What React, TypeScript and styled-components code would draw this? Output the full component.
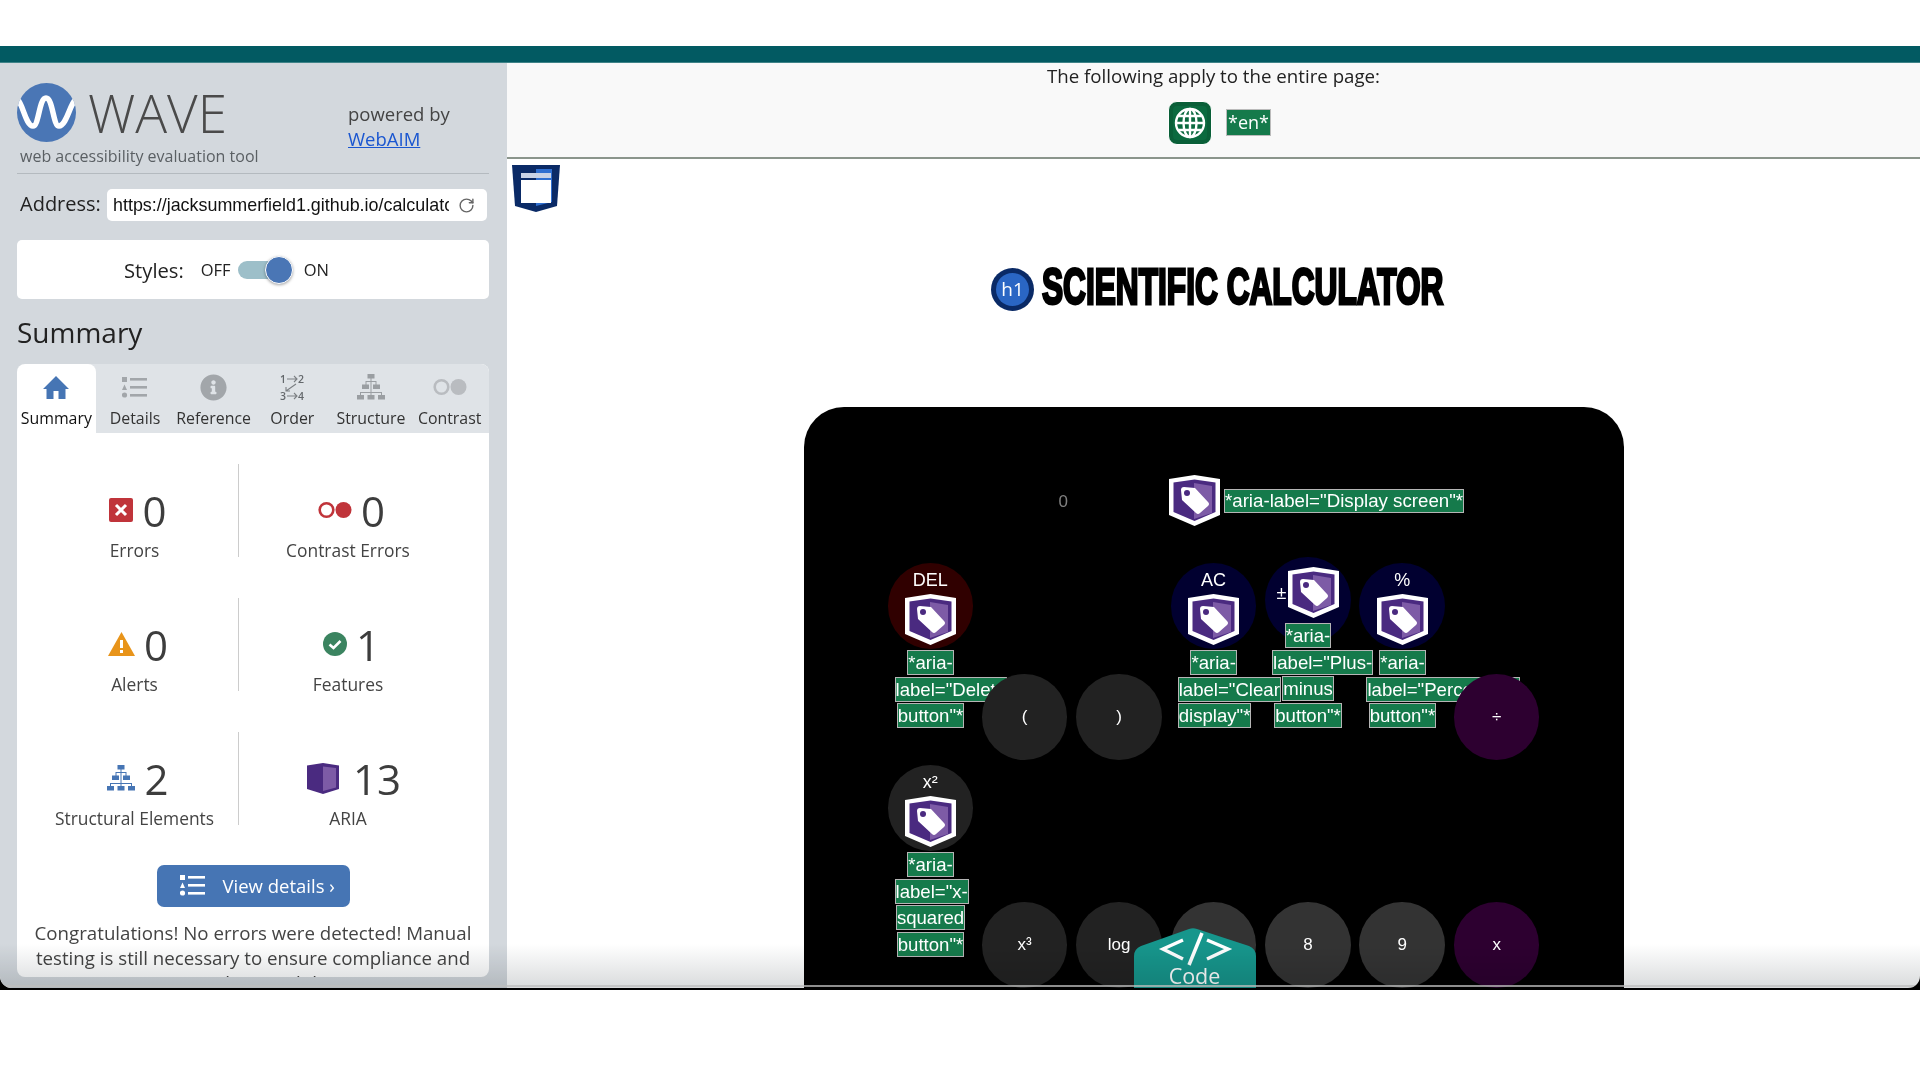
import styled, { createGlobalStyle } from 'styled-components';
import { FaInfoCircle } from 'react-icons/fa';
import { RotateCw } from 'lucide-react';

const GlobalStyle = createGlobalStyle`
  html, body {
    margin: 0;
    background: #fff;
  }
  * {
    box-sizing: border-box;
  }
`;

const Page = styled.div`
  width: 1920px;
  height: 1080px;
  padding-top: 46px;
  overflow: hidden;
  font-family: 'Open Sans', sans-serif;
`;

const TopBar = styled.div`
  height: 17px;
  background: #025a62;
  border-bottom: 1px solid #3f8388;
`;

const WindowFrame = styled.div`
  background: #000;
  padding-bottom: 2px;
`;

const Window = styled.div`
  position: relative;
  display: flex;
  height: 925px;
  overflow: hidden;
  background: #fff;
  border-radius: 0 0 12px 12px;
`;

const Vignette = styled.div`
  position: absolute;
  left: 0;
  right: 0;
  bottom: 0;
  height: 44px;
  background: linear-gradient(to bottom, #fff, #d9dbdc);
  mix-blend-mode: multiply;
  pointer-events: none;
  z-index: 5;
`;

const EdgeLine = styled.div`
  position: absolute;
  left: 0;
  right: 0;
  bottom: 1px;
  height: 2px;
  background: rgba(190, 190, 190, 0.75);
  pointer-events: none;
  z-index: 6;
`;

const Sidebar = styled.aside`
  width: 507px;
  flex: none;
  background: #d3d8dd;
  padding: 0 18px 0 17px;
  display: flex;
  flex-direction: column;
`;

const Brand = styled.div`
  display: flex;
  height: 111px;
  border-bottom: 1px solid #b4babf;
`;

const BrandLeft = styled.div`
  width: 331px;
  flex: none;
  padding-top: 20px;
`;

const BrandTop = styled.div`
  display: flex;
  align-items: center;
  gap: 12px;
  height: 59px;
`;

const WaveTitle = styled.div`
  font-size: 53px;
  font-weight: 300;
  line-height: 59px;
  color: #4a4a4a;
`;

const Tagline = styled.div`
  font-size: 16px;
  line-height: 20px;
  color: #5a5f63;
  margin: 4px 0 0 3px;
`;

const Powered = styled.div`
  padding-top: 38px;
  font-size: 18.5px;
  line-height: 25px;
  color: #444;
`;

const PoweredLink = styled.a`
  display: block;
  color: #1a56d0;
  text-decoration: underline;
`;

const AddressRow = styled.div`
  display: flex;
  align-items: center;
  height: 32px;
  margin-top: 15px;
  padding-left: 3px;
`;

const AddressLabel = styled.div`
  width: 87px;
  flex: none;
  font-size: 20px;
  margin-top: -3px;
  color: #222;
`;

const AddressBox = styled.div`
  width: 380px;
  height: 32px;
  padding: 0 12px 0 6px;
  background: #fff;
  border-radius: 5px;
  display: flex;
  align-items: center;
  gap: 9px;
  color: #666;
`;

const AddressText = styled.div`
  flex: 1;
  overflow: hidden;
  white-space: nowrap;
  font-family: 'Liberation Sans', Arial, sans-serif;
  font-size: 17.9px;
  color: #111;
`;

const StylesCard = styled.div`
  height: 59px;
  margin-top: 19px;
  background: #fff;
  border-radius: 5px;
  display: flex;
  align-items: center;
  padding-left: 107px;
  color: #222;
`;

const StylesLabel = styled.div`
  font-size: 20.2px;
  margin-right: 17px;
`;

const SwitchText = styled.div`
  font-size: 16.5px;
`;

const Switch = styled.div`
  position: relative;
  width: 52px;
  height: 18px;
  margin: 0 14px 0 7px;
  background: #9dbfc9;
  border-radius: 9px;
`;

const SwitchKnob = styled.div`
  position: absolute;
  right: -3px;
  top: -5px;
  width: 28px;
  height: 28px;
  border-radius: 50%;
  background: #4a76b5;
  box-shadow: 0 1px 3px rgba(0, 0, 0, 0.35);
  border: 1px solid #fff;
`;

const SummaryTitle = styled.h2`
  margin: 15px 0 0;
  font-size: 28px;
  line-height: 36px;
  font-weight: 400;
  color: #222;
`;

const Card = styled.div`
  margin-top: 14px;
  height: 613px;
  overflow: hidden;
  background: #fff;
  border-radius: 8px;
`;

const Tabs = styled.div`
  display: grid;
  grid-template-columns: repeat(6, 1fr);
  height: 69px;
  background: #dfe3e7;
`;

const Tab = styled.div<{ $active?: boolean }>`
  display: flex;
  flex-direction: column;
  align-items: center;
  padding-top: 9px;
  background: ${props => (props.$active ? '#fff' : 'transparent')};
  border-radius: ${props => (props.$active ? '8px 8px 0 0' : '0')};
  color: ${props => (props.$active ? '#111' : '#333')};
`;

const TabIcon = styled.div<{ $active?: boolean }>`
  height: 28px;
  display: flex;
  align-items: center;
  justify-content: center;
  color: ${props => (props.$active ? '#4675b4' : '#a2a6aa')};
`;

const TabLabel = styled.div`
  margin-top: 6px;
  font-size: 15.9px;
  line-height: 22px;
  white-space: nowrap;
`;

const Stats = styled.div`
  display: grid;
  grid-template-columns: 208px 218px;
  row-gap: 41px;
  padding: 31px 0 0 14px;
`;

const Stat = styled.div<{ $divider?: boolean }>`
  height: 93px;
  display: flex;
  flex-direction: column;
  align-items: center;
  padding-top: 21px;
  border-right: ${props => (props.$divider ? '1px solid #ccc' : 'none')};
`;

const StatValue = styled.div`
  display: flex;
  align-items: center;
  gap: 9px;
  height: 50px;
  margin-left: 7px;
  font-size: 42px;
  font-weight: 400;
  color: #3d3d3d;
`;

const StatLabel = styled.div`
  margin-top: 4px;
  font-size: 17.4px;
  line-height: 23px;
  color: #444;
  white-space: nowrap;
`;

const ViewDetails = styled.button`
  display: flex;
  align-items: center;
  gap: 18px;
  width: 193px;
  height: 42px;
  margin: 40px auto 0;
  padding: 0 0 2px 23px;
  background: #4675b4;
  border: none;
  border-radius: 7px;
  color: #fff;
  font-family: inherit;
  font-size: 18.5px;
`;

const Congrats = styled.p`
  margin: 13px 0 0;
  padding: 0 12px;
  text-align: center;
  font-size: 18.7px;
  line-height: 25px;
  color: #444;
`;

const Main = styled.main`
  flex: 1;
  display: flex;
  flex-direction: column;
  min-width: 0;
`;

const PageNotes = styled.div`
  height: 96px;
  flex: none;
  background: #f9f9f9;
  border-bottom: 2px solid #8b958c;
  display: flex;
  flex-direction: column;
  align-items: center;
`;

const NotesTitle = styled.div`
  font-size: 18.7px;
  line-height: 26px;
  color: #222;
`;

const NotesRow = styled.div`
  display: flex;
  align-items: center;
  gap: 14px;
  margin: 12px 0 0 12px;
`;

const GlobeBadge = styled.div`
  width: 44px;
  height: 44px;
  border-radius: 9px;
  background: #0b6a3f;
  border: 1px solid #fff;
  box-shadow: inset 0 0 0 4px #0a5f38;
  display: flex;
  align-items: center;
  justify-content: center;
`;

const LangNote = styled.div`
  height: 27px;
  margin-top: -2px;
  padding: 0 1px;
  background: #157a4b;
  border: 1px solid #bbb;
  font-size: 18px;
  line-height: 25px;
  color: #fff;
`;

const Content = styled.div`
  flex: 1;
  min-height: 0;
  display: flex;
  flex-direction: column;
  padding-top: 5px;
`;

const LandmarkSlot = styled.div`
  height: 48px;
  padding-left: 5px;
`;

const HeadingRow = styled.div`
  display: flex;
  align-items: center;
  justify-content: center;
  gap: 8px;
  height: 44px;
  margin-top: 55px;
  margin-bottom: 1px;
  padding-left: 8px;
`;

const Heading = styled.h1`
  width: 402px;
  margin: 0 0 5px;
  white-space: nowrap;
  font-family: 'Liberation Sans', Arial, sans-serif;
  font-size: 50px;
  line-height: 44px;
  font-weight: 700;
  color: #000;
  -webkit-text-stroke: 3px #000;
  transform: scaleX(0.633);
  transform-origin: left center;
`;

const Calculator = styled.div`
  position: relative;
  width: 820px;
  flex: 1;
  min-height: 0;
  margin: 95px auto 0;
  padding: 68px 84px 0;
  overflow: hidden;
  background: #000;
  border-radius: 40px 40px 0 0;
  font-family: 'Liberation Sans', Arial, sans-serif;
`;

const DisplayRow = styled.div`
  display: flex;
  align-items: center;
  gap: 101px;
  height: 51px;
  padding-left: 171px;
`;

const DisplayValue = styled.div`
  font-size: 17px;
  padding-top: 3px;
  color: #808080;
`;

const DisplayNote = styled.div`
  display: flex;
  align-items: center;
  gap: 4px;
`;

const KeyRow = styled.div<{ $top: number; $height: number }>`
  display: grid;
  grid-template-columns: repeat(7, 85.6px);
  column-gap: 8.8px;
  align-items: start;
  height: ${props => props.$height}px;
  margin-top: ${props => props.$top}px;
`;

const KeyShell = styled.div<{ $drop: number; $bg: string; $plain: boolean }>`
  position: relative;
  width: 85.6px;
  height: 86px;
  margin-top: ${props => props.$drop}px;
  border-radius: 50%;
  background: ${props => props.$bg};
  color: #fff;
  font-size: 17px;
  ${props => (props.$plain ? 'display: flex; align-items: center; justify-content: center;' : '')}
`;

const KeyFace = styled.div<{ $inline?: boolean }>`
  display: flex;
  flex-direction: ${props => (props.$inline ? 'row' : 'column')};
  align-items: center;
  justify-content: center;
  gap: ${props => (props.$inline ? '2px' : '0')};
  padding-top: ${props => (props.$inline ? '10px' : '4px')};
`;

const KeyCap = styled.div<{ $inline?: boolean }>`
  height: ${props => (props.$inline ? '20px' : '27px')};
  line-height: ${props => (props.$inline ? '20px' : '27px')};
  font-size: 18px;
`;

const NoteBlock = styled.div`
  width: 72px;
  margin: 5px 0 0 7px;
  text-align: center;
  font-size: 18.6px;
  line-height: 26.67px;
`;

const NoteText = styled.span`
  padding: 1px 0;
  background: #157a4b;
  border: 1px solid #b5b5b5;
  color: #fff;
  -webkit-box-decoration-break: clone;
  box-decoration-break: clone;
`;

const NoteInline = styled.div`
  height: 24px;
  margin-top: 1px;
  background: #157a4b;
  border: 1px solid #b5b5b5;
  color: #fff;
  font-size: 18.7px;
  line-height: 22px;
  white-space: nowrap;
`;

const CodeTab = styled.div`
  position: absolute;
  left: 330px;
  bottom: 0;
  width: 122px;
  height: 60px;
  z-index: 4;
`;

const CodeLabel = styled.div`
  position: absolute;
  left: 0;
  right: 0;
  bottom: 1px;
  text-align: center;
  font-family: 'Open Sans', sans-serif;
  font-size: 21.5px;
  line-height: 22px;
  color: #fff;
`;

const IconSvg = styled.svg`
  flex: none;
`;

const AriaBoxSvg = styled.svg`
  flex: none;
  margin: 0 5px;
`;

const WaveLogo = () => (
  <IconSvg width="59" height="59" viewBox="0 0 59 59">
    <clipPath id="wave-clip">
      <circle cx="29.5" cy="29.5" r="29.5" />
    </clipPath>
    <circle cx="29.5" cy="29.5" r="29.5" fill="#4a76b5" />
    <path
      clipPath="url(#wave-clip)"
      d="M1 17 C6 22 9 43 16 43 C22 43 22 15 29 15 C36 15 36 43 42 43 C49 43 53 22 58 17"
      fill="none"
      stroke="#fff"
      strokeWidth="5.5"
    />
  </IconSvg>
);

const HomeIcon = () => (
  <IconSvg width="26" height="23" viewBox="0 0 26 23" fill="currentColor">
    <path d="M13 0 L26 13 H22.5 V23 H15.5 V15 H10.5 V23 H3.5 V13 H0 Z" />
  </IconSvg>
);

const ListIcon = () => (
  <IconSvg width="25" height="21" viewBox="0 0 25 21" fill="currentColor">
    <rect x="0" y="0" width="5" height="5" />
    <path d="M2.5 7.5 L5 13 H0 Z" />
    <circle cx="2.5" cy="18" r="2.6" />
    <rect x="8" y="1" width="17" height="2.6" />
    <rect x="8" y="9" width="17" height="2.6" />
    <rect x="8" y="17" width="17" height="2.6" />
  </IconSvg>
);

const GlobeIcon = () => (
  <IconSvg width="32" height="32" viewBox="0 0 32 32" fill="none" stroke="#fff" strokeWidth="2.4">
    <circle cx="16" cy="16" r="14" />
    <ellipse cx="16" cy="16" rx="6.5" ry="14" />
    <path d="M16 2 V30 M2.5 16 H29.5 M4.5 9 H27.5 M4.5 23 H27.5" />
  </IconSvg>
);

const OrderIcon = () => (
  <IconSvg width="26" height="28" viewBox="0 0 26 28" fill="none" stroke="#7c8084" strokeWidth="1.1">
    <text x="1" y="10" fontSize="10.5" fontWeight="600" fill="#63676b" stroke="none" fontFamily="Open Sans">1</text>
    <text x="19" y="10" fontSize="10.5" fontWeight="600" fill="#63676b" stroke="none" fontFamily="Open Sans">2</text>
    <text x="1" y="27" fontSize="10.5" fontWeight="600" fill="#63676b" stroke="none" fontFamily="Open Sans">3</text>
    <text x="19" y="27" fontSize="10.5" fontWeight="600" fill="#63676b" stroke="none" fontFamily="Open Sans">4</text>
    <path d="M8 6 H18 M15 3 L18 6 L15 9" />
    <path d="M8 23 H18 M15 20 L18 23 L15 26" />
    <path d="M17 11 L7 18 M7 14 V18 H11" />
  </IconSvg>
);

const TreeIcon = ({ color }: { color: string }) => (
  <IconSvg width="28" height="28" viewBox="0 0 28 28" fill={color}>
    <rect x="10.5" y="1" width="7" height="4.5" />
    <rect x="5" y="11.5" width="7" height="4.5" />
    <rect x="16" y="11.5" width="7" height="4.5" />
    <rect x="0" y="22" width="7" height="4.5" />
    <rect x="10.5" y="22" width="7" height="4.5" />
    <rect x="21" y="22" width="7" height="4.5" />
    <path d="M13.5 5 h1 v3 h5 v4 h-1 v-3 h-9 v3 h-1 v-4 h5 Z" />
    <path d="M13.5 9 h1 v14 h-1 Z M3 19 h22 v3.5 h-1 v-2.5 h-20 v2.5 h-1 Z" />
  </IconSvg>
);

const ContrastIcon = ({ color }: { color: string }) => (
  <IconSvg width="34" height="18" viewBox="0 0 34 18">
    <circle cx="8.5" cy="9" r="6.8" fill="none" stroke={color} strokeWidth="2.6" />
    <circle cx="25.5" cy="9" r="8" fill={color} />
  </IconSvg>
);

const ErrorIcon = () => (
  <IconSvg width="24" height="24" viewBox="0 0 24 24">
    <rect width="24" height="24" rx="2" fill="#c0343a" />
    <path d="M7 7 L17 17 M17 7 L7 17" stroke="#fff" strokeWidth="3" />
  </IconSvg>
);

const AlertIcon = () => (
  <IconSvg width="27" height="24" viewBox="0 0 27 24">
    <path d="M13.5 0 L27 24 H0 Z" fill="#e8941a" />
    <rect x="12" y="8" width="3" height="8" fill="#fff" />
    <rect x="12" y="18" width="3" height="3" fill="#fff" />
  </IconSvg>
);

const FeatureIcon = () => (
  <IconSvg width="24" height="24" viewBox="0 0 24 24">
    <circle cx="12" cy="12" r="12" fill="#3b8460" />
    <path d="M6.5 12.5 L10.5 16 L17.5 9" fill="none" stroke="#fff" strokeWidth="2.6" />
  </IconSvg>
);

const AriaBoxIcon = () => (
  <AriaBoxSvg width="32" height="31" viewBox="0 0 32 31">
    <path d="M0 2.5 L16 0 L32 2.5 V26 L16 31 L0 26 Z" fill="#4a2a80" />
    <path d="M16 3.5 L29 5 V24.5 L16 28 Z" fill="#7d5ba6" />
  </AriaBoxSvg>
);

const AriaIcon = () => (
  <IconSvg width="51" height="51" viewBox="0 0 51 51">
    <path d="M0 4 L25.5 0 L51 4 V40 L25.5 51 L0 40 Z" fill="#fff" />
    <path d="M4.5 7.5 L25.5 4.5 L46.5 7.5 V37 L25.5 46 L4.5 37 Z" fill="#4a2a80" />
    <path d="M25 8 L43 11 V38 L25 44 Z" fill="#7d5ba6" />
    <path
      d="M12 15 Q12 12 15 12 L26 13 L39 27 Q41 29 39 31 L31 38 Q29 40 27 38 L13 25 Z"
      fill="#fff"
    />
    <circle cx="18" cy="18" r="3" fill="#4a2a80" />
  </IconSvg>
);

const LandmarkIcon = () => (
  <IconSvg width="48" height="48" viewBox="0 0 48 48">
    <path d="M0 1 H48 L45 42 L24 48 L3 42 Z" fill="#0a2a66" />
    <path d="M24 5 H40 V38 L24 42 Z" fill="#2f6fd0" />
    <rect x="9" y="9" width="30" height="5" fill="#c9d3e6" />
    <rect x="9" y="16" width="30" height="23" fill="#fff" />
  </IconSvg>
);

const H1Icon = () => (
  <IconSvg width="43" height="43" viewBox="0 0 43 43">
    <circle cx="21.5" cy="21.5" r="21.5" fill="#0a2a66" />
    <circle cx="21.5" cy="21.5" r="16.5" fill="#2a66c4" />
    <text x="21.5" y="28" fontSize="19" textAnchor="middle" fill="#fff" fontFamily="Open Sans">h1</text>
  </IconSvg>
);

const CodeShape = () => (
  <IconSvg width="122" height="60" viewBox="0 0 122 60">
    <path d="M0 60 V28 Q0 21 7 18 L55 1 Q59 -0.5 63 1 L115 18 Q122 21 122 28 V60 Z" fill="#16968c" />
    <path d="M49 12 L29 21 L49 31 M73 12 L94 21 L73 31" fill="none" stroke="#fff" strokeWidth="3.5" />
    <path d="M68 5 L55 37" fill="none" stroke="#fff" strokeWidth="3.5" />
  </IconSvg>
);

const tabs = [
  { label: 'Summary', icon: <HomeIcon />, active: true },
  { label: 'Details', icon: <ListIcon /> },
  { label: 'Reference', icon: <FaInfoCircle size={27} /> },
  { label: 'Order', icon: <OrderIcon /> },
  { label: 'Structure', icon: <TreeIcon color="#9a9ea2" /> },
  { label: 'Contrast', icon: <ContrastIcon color="#b9bcc0" /> },
];

const stats = [
  { label: 'Errors', count: 0, icon: <ErrorIcon /> },
  { label: 'Contrast Errors', count: 0, icon: <ContrastIcon color="#c0343a" /> },
  { label: 'Alerts', count: 0, icon: <AlertIcon /> },
  { label: 'Features', count: 1, icon: <FeatureIcon /> },
  { label: 'Structural Elements', count: 2, icon: <TreeIcon color="#4675b4" /> },
  { label: 'ARIA', count: 13, icon: <AriaBoxIcon /> },
];

type KeyProps = {
  cap: string;
  bg: string;
  drop?: number;
  note?: string;
  inline?: boolean;
};

const Key = ({ cap, bg, drop = 0, note, inline }: KeyProps) => (
  <KeyShell $drop={drop} $bg={bg} $plain={!note}>
    {note ? (
      <>
        <KeyFace $inline={inline}>
          <KeyCap $inline={inline}>{cap}</KeyCap>
          <AriaIcon />
        </KeyFace>
        <NoteBlock>
          <NoteText>{note}</NoteText>
        </NoteBlock>
      </>
    ) : (
      cap
    )}
  </KeyShell>
);

const App = () => (
  <>
    <GlobalStyle />
    <Page>
      <TopBar />
      <WindowFrame>
        <Window>
          <Sidebar>
            <Brand>
              <BrandLeft>
                <BrandTop>
                  <WaveLogo />
                  <WaveTitle>WAVE</WaveTitle>
                </BrandTop>
                <Tagline>web accessibility evaluation tool</Tagline>
              </BrandLeft>
              <Powered>
                powered by
                <PoweredLink href="#">WebAIM</PoweredLink>
              </Powered>
            </Brand>
            <AddressRow>
              <AddressLabel>Address:</AddressLabel>
              <AddressBox>
                <AddressText>https://jacksummerfield1.github.io/calculator/</AddressText>
                <RotateCw size={17} />
              </AddressBox>
            </AddressRow>
            <StylesCard>
              <StylesLabel>Styles:</StylesLabel>
              <SwitchText>OFF</SwitchText>
              <Switch>
                <SwitchKnob />
              </Switch>
              <SwitchText>ON</SwitchText>
            </StylesCard>
            <SummaryTitle>Summary</SummaryTitle>
            <Card>
              <Tabs>
                {tabs.map(tab => (
                  <Tab key={tab.label} $active={tab.active}>
                    <TabIcon $active={tab.active}>{tab.icon}</TabIcon>
                    <TabLabel>{tab.label}</TabLabel>
                  </Tab>
                ))}
              </Tabs>
              <Stats>
                {stats.map((stat, i) => (
                  <Stat key={stat.label} $divider={i % 2 === 0}>
                    <StatValue>
                      {stat.icon}
                      {stat.count}
                    </StatValue>
                    <StatLabel>{stat.label}</StatLabel>
                  </Stat>
                ))}
              </Stats>
              <ViewDetails>
                <ListIcon />
                View details ›
              </ViewDetails>
              <Congrats>
                Congratulations! No errors were detected! Manual testing is still necessary to ensure
                compliance and optimal accessibility.
              </Congrats>
            </Card>
          </Sidebar>
          <Main>
            <PageNotes>
              <NotesTitle>The following apply to the entire page:</NotesTitle>
              <NotesRow>
                <GlobeBadge>
                  <GlobeIcon />
                </GlobeBadge>
                <LangNote>*en*</LangNote>
              </NotesRow>
            </PageNotes>
            <Content>
              <LandmarkSlot>
                <LandmarkIcon />
              </LandmarkSlot>
              <HeadingRow>
                <H1Icon />
                <Heading>SCIENTIFIC CALCULATOR</Heading>
              </HeadingRow>
              <Calculator>
                <DisplayRow>
                  <DisplayValue>0</DisplayValue>
                  <DisplayNote>
                    <AriaIcon />
                    <NoteInline>*aria-label="Display screen"*</NoteInline>
                  </DisplayNote>
                </DisplayRow>
                <KeyRow $top={31} $height={203}>
                  <Key cap="DEL" bg="#300000" drop={6} note={'*aria-label="Delete button"*'} />
                  <Key cap="(" bg="#222" drop={117} />
                  <Key cap=")" bg="#222" drop={117} />
                  <Key cap="AC" bg="#010030" drop={6} note={'*aria-label="Clear display"*'} />
                  <Key cap="±" bg="#010030" note={'*aria-label="Plus-minus button"*'} inline />
                  <Key cap="%" bg="#010030" drop={6} note={'*aria-label="Percentage button"*'} />
                  <Key cap="÷" bg="#2d0030" drop={117} />
                </KeyRow>
                <KeyRow $top={5} $height={223}>
                  <Key cap="x²" bg="#222" note={'*aria-label="x-squared button"*'} />
                  <Key cap="x³" bg="#222" drop={137} />
                  <Key cap="log" bg="#222" drop={137} />
                  <Key cap="7" bg="#333" drop={137} />
                  <Key cap="8" bg="#333" drop={137} />
                  <Key cap="9" bg="#333" drop={137} />
                  <Key cap="x" bg="#2d0030" drop={137} />
                </KeyRow>
                <CodeTab>
                  <CodeShape />
                  <CodeLabel>Code</CodeLabel>
                </CodeTab>
              </Calculator>
            </Content>
          </Main>
          <Vignette />
          <EdgeLine />
        </Window>
      </WindowFrame>
    </Page>
  </>
);

export default App;
